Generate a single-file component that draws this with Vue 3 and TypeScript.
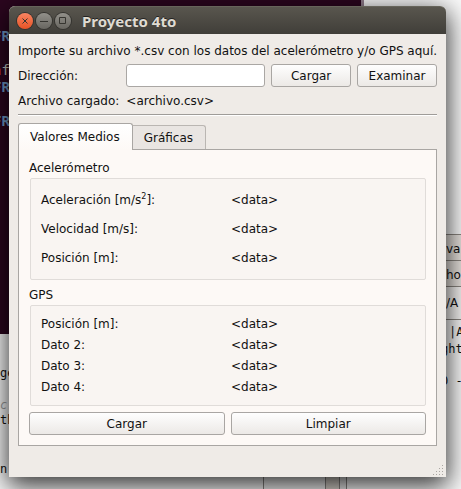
<script setup lang="ts">
import { ref } from 'vue'

interface Reading {
  label: string
  sup?: string
  tail?: string
  value: string
}

const file = ref('')
const activeTab = ref(0)
const tabs = ['Valores Medios', 'Gráficas']

const accelerometer: Reading[] = [
  { label: 'Aceleración [m/s', sup: '2', tail: ']:', value: '<data>' },
  { label: 'Velocidad [m/s]:', value: '<data>' },
  { label: 'Posición [m]:', value: '<data>' },
]
const gps: Reading[] = [
  { label: 'Posición [m]:', value: '<data>' },
  { label: 'Dato 2:', value: '<data>' },
  { label: 'Dato 3:', value: '<data>' },
  { label: 'Dato 4:', value: '<data>' },
]
const gripDots = [
  [9, 0], [6, 3], [9, 3], [3, 6], [6, 6], [9, 6], [0, 9], [3, 9], [6, 9], [9, 9],
]
</script>

<template>
  <div class="desktop">
    <div class="backdrop" aria-hidden="true">
      <div class="editor">
        <span class="bit ge">ge</span>
        <span class="bit comment">c</span>
        <span class="bit th">th</span>
        <span class="bit n">n</span>
        <span class="bit pipe">|A</span>
        <span class="bit ght">ght</span>
        <span class="bit zero">0 -</span>
      </div>
      <div class="side">
        <span>va</span>
        <span>ho</span>
        <span>/A</span>
      </div>
      <div class="footer-strip"></div>
      <div class="terminal">
        <span class="bit r1">FR</span>
        <span class="bit r2"><i>a</i>f</span>
        <span class="bit r3">FR</span>
        <span class="bit r4">FR</span>
      </div>
    </div>

    <main class="window">
      <header class="titlebar">
        <button class="ctl close" type="button" aria-label="Cerrar">
          <svg viewBox="0 0 16 16"><path d="M5.500 5.500l5 5M10.500 5.500l-5 5" /></svg>
        </button>
        <button class="ctl" type="button" aria-label="Minimizar">
          <svg viewBox="0 0 16 16"><path d="M4 8.500h8" /></svg>
        </button>
        <button class="ctl" type="button" aria-label="Maximizar">
          <svg viewBox="0 0 16 16"><path d="M4.500 4.500h6v6h-6z" /></svg>
        </button>
        <h1>Proyecto 4to</h1>
      </header>

      <div class="content">
        <p class="intro">Importe su archivo *.csv con los datos del acelerómetro y/o GPS aquí.</p>
        <div class="form">
          <label for="path">Dirección:</label>
          <div class="controls">
            <input id="path" v-model="file" type="text" />
            <button class="btn" type="button">Cargar</button>
            <button class="btn" type="button">Examinar</button>
          </div>
          <span>Archivo cargado:</span>
          <span>&lt;archivo.csv&gt;</span>
        </div>
        <hr />

        <div class="tabs" role="tablist">
          <button
            v-for="(tab, i) in tabs"
            :key="tab"
            class="tab"
            :class="{ active: i === activeTab }"
            type="button"
            role="tab"
            :aria-selected="i === activeTab"
            @click="activeTab = i"
          >{{ tab }}</button>
        </div>
        <section class="pane">
          <h2>Acelerómetro</h2>
          <dl class="group roomy">
            <template v-for="r in accelerometer" :key="r.label">
              <dt>{{ r.label }}<sup v-if="r.sup">{{ r.sup }}</sup>{{ r.tail }}</dt>
              <dd>{{ r.value }}</dd>
            </template>
          </dl>
          <h2>GPS</h2>
          <dl class="group">
            <template v-for="r in gps" :key="r.label">
              <dt>{{ r.label }}</dt>
              <dd>{{ r.value }}</dd>
            </template>
          </dl>
          <div class="actions">
            <button class="btn" type="button">Cargar</button>
            <button class="btn" type="button">Limpiar</button>
          </div>
        </section>
      </div>
      <svg class="grip" viewBox="0 0 11 11" aria-hidden="true">
        <rect v-for="([x, y], i) in gripDots" :key="i" :x="x" :y="y" width="1" height="1" />
      </svg>
    </main>
  </div>
</template>

<style>
body {
  margin: 0;
  overflow: hidden;
}
</style>

<style scoped>
* {
  box-sizing: border-box;
}

.desktop {
  position: relative;
  min-height: 100vh;
  padding: 6px 15px 12px 9px;
  overflow: hidden;
  background: #fafafa;
  color: #111;
  font: 12px/16px "DejaVu Sans", sans-serif;
}

.backdrop,
.editor {
  position: absolute;
  inset: 0;
}

.backdrop {
  font: 12px/16px "DejaVu Sans Mono", monospace;
}

.bit {
  position: absolute;
  white-space: pre;
}

.ge { left: 0; top: 365px; }
.comment { left: 0; top: 397px; color: #a0a0a0; font-style: italic; }
.th { left: 0; top: 412px; }
.n { left: 0; top: 461px; }
.pipe { left: 449px; top: 324px; }
.ght { left: 441px; top: 341px; }
.zero { left: 441px; top: 373px; }

.side {
  position: absolute;
  left: 430px;
  right: 0;
  top: 234px;
  padding-left: 16px;
  border-top: 1px solid #8c8781;
  background: #e8e3de;
  font-family: "DejaVu Sans", sans-serif;
}

.side span {
  display: block;
  height: 26px;
  border-bottom: 1px solid #8c8781;
  line-height: 29px;
}

.side span:last-child {
  height: 33px;
  background: #f6f4f2;
  line-height: 32px;
}

.footer-strip {
  position: absolute;
  left: 263px;
  right: 114px;
  bottom: 0;
  height: 20px;
  border: solid #8a8784;
  border-width: 0 1px;
  background: linear-gradient(to right, #f5f5f5 61px, #8a8784 61px, #8a8784 62px, #dcd6cf 62px, #dcd6cf 75px, #8a8784 75px, #8a8784 76px, #eee 76px);
}

.terminal {
  position: absolute;
  left: 0;
  top: 0;
  width: 364px;
  height: 334px;
  border-right: 3px solid #94808f;
  background: #2c061f;
  color: #d3d7cf;
  font-size: 14px;
}

.r1, .r3, .r4 { left: -7px; color: #729fcf; font-weight: bold; }
.r1 { top: 28px; }
.r2 { left: -7px; top: 62px; }
.r2 i { color: #e35b3c; font-style: normal; }
.r3 { top: 79px; }
.r4 { top: 113px; }

.window {
  position: relative;
  border-radius: 6px 6px 0 0;
  background: #efebe7;
  box-shadow: 0 7px 26px 2px rgba(0, 0, 0, 0.8);
}

.titlebar {
  display: flex;
  align-items: center;
  gap: 3px;
  height: 28px;
  padding: 0 8px;
  border-top: 1px solid #66645a;
  border-radius: 6px 6px 0 0;
  background: linear-gradient(#59564e, #403e39);
}

.titlebar h1 {
  margin: 0 0 0 8px;
  color: #dfdbd2;
  font: bold 15px/16px "Noto Sans", sans-serif;
  text-shadow: 0 -1px #222;
}

.ctl {
  width: 16px;
  height: 16px;
  padding: 0;
  border: 0;
  border-radius: 50%;
  background: linear-gradient(#92908a, #686660);
  box-shadow: 0 0 0 1px #34332f;
}

.ctl.close {
  background: linear-gradient(#f98462, #e65325);
}

.ctl svg {
  display: block;
  width: 16px;
  height: 16px;
  fill: none;
  stroke: #363530;
  stroke-width: 1;
}

.content {
  padding: 9px 9px 31px;
}

.intro {
  margin: 0 0 5px;
  white-space: nowrap;
}

.form {
  display: grid;
  grid-template-columns: auto 1fr;
  align-items: center;
  gap: 6px 7px;
}

.controls {
  display: grid;
  grid-template-columns: 139fr 80fr 80fr;
  gap: 6px;
}

input {
  width: 100%;
  min-width: 0;
  height: 23px;
  padding: 0 4px;
  border: 1px solid #aaa7a4;
  border-radius: 3px;
  background: #fff;
  font: inherit;
}

.btn {
  height: 23px;
  padding: 0;
  border: 1px solid #a9a6a3;
  border-radius: 3px;
  background: linear-gradient(#fefefe, #ece9e6);
  color: inherit;
  font: inherit;
}

hr {
  height: 2px;
  margin: 5px 0 7px;
  border: 0;
  border-top: 1px solid #9f9c99;
  background: #fff;
}

.tabs {
  display: flex;
  align-items: flex-end;
}

.tab {
  height: 24px;
  padding: 0 12px 0 11px;
  border: 1px solid #bab6b2;
  border-bottom: 0;
  border-left: 0;
  border-radius: 0 3px 0 0;
  background: #e9e5e2;
  color: inherit;
  font: inherit;
}

.tab.active {
  position: relative;
  height: 27px;
  margin-bottom: -1px;
  border-color: #a9a6a3;
  border-left: 1px solid #a9a6a3;
  border-radius: 3px 3px 0 0;
  background: linear-gradient(#fff, #fdf9f6);
}

.pane {
  padding: 10px;
  border: 1px solid #a9a6a3;
  background: #fdf9f6;
}

.pane h2 {
  margin: 0 0 2px;
  font: inherit;
}

.group {
  display: grid;
  grid-template-columns: 190fr 184fr;
  gap: 5px 0;
  margin: 0 0 6px 1px;
  padding: 10px;
  border: 1px solid #e0dcd9;
  border-radius: 2px;
  background: #f9f5f2;
}

.group.roomy {
  gap: 13px 0;
  margin-bottom: 7px;
  padding: 13px 10px;
}

dt,
dd {
  margin: 0;
}

sup {
  font-size: 8px;
  line-height: 1px;
}

.actions {
  display: grid;
  grid-template-columns: 1fr 1fr;
  gap: 6px;
}

.grip {
  position: absolute;
  right: 2px;
  bottom: 1px;
  width: 11px;
  height: 11px;
  fill: #aaa6a2;
}
</style>
